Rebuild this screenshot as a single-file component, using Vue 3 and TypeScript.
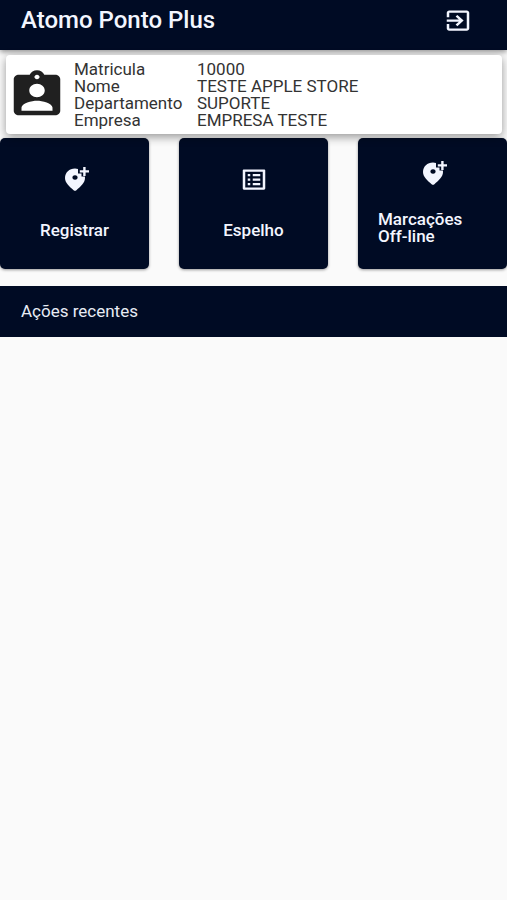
<script setup lang="ts">
interface Field {
  label: string
  value: string
}

interface Action {
  label: string
  icon: 'pin' | 'list'
}

const fields: Field[] = [
  { label: 'Matricula', value: '10000' },
  { label: 'Nome', value: 'TESTE APPLE STORE' },
  { label: 'Departamento', value: 'SUPORTE' },
  { label: 'Empresa', value: 'EMPRESA TESTE' },
]

const actions: Action[] = [
  { label: 'Registrar', icon: 'pin' },
  { label: 'Espelho', icon: 'list' },
  { label: 'Marcações Off-line', icon: 'pin' },
]
</script>

<template>
  <div class="page">
    <header class="app-bar">
      <h1 class="title">Atomo Ponto Plus</h1>
      <button class="exit" type="button" aria-label="Sair">
        <svg class="icon" viewBox="0 0 24 24" preserveAspectRatio="none" aria-hidden="true">
          <path d="M10.09 15.59L11.5 17l5-5-5-5-1.41 1.41L12.67 11H3v2h9.67l-2.58 2.59zM19 3H5c-1.11 0-2 .9-2 2v4h2V5h14v14H5v-4H3v4c0 1.1.89 2 2 2h14c1.1 0 2-.9 2-2V5c0-1.1-.9-2-2-2z" />
        </svg>
      </button>
    </header>

    <main>
      <section class="profile">
        <svg class="badge" viewBox="0 0 24 24" preserveAspectRatio="none" aria-hidden="true">
          <path d="M19 3h-4.18C14.4 1.84 13.3 1 12 1c-1.3 0-2.4.84-2.82 2H5c-1.1 0-2 .9-2 2v14c0 1.1.9 2 2 2h14c1.1 0 2-.9 2-2V5c0-1.1-.9-2-2-2zm-7 0c.55 0 1 .45 1 1s-.45 1-1 1-1-.45-1-1 .45-1 1-1zm0 4c1.66 0 3 1.34 3 3s-1.34 3-3 3-3-1.34-3-3 1.34-3 3-3zm6 12H4v0h2v-1.4c0-2 4-3.1 6-3.1s6 1.1 6 3.1V19z" />
        </svg>
        <dl class="fields">
          <template v-for="field in fields" :key="field.label">
            <dt>{{ field.label }}</dt>
            <dd>{{ field.value }}</dd>
          </template>
        </dl>
      </section>

      <nav class="actions">
        <button v-for="action in actions" :key="action.label" class="action" type="button">
          <svg v-if="action.icon === 'pin'" class="icon" viewBox="-1 0 30 27" aria-hidden="true">
            <path fill-rule="evenodd" d="M14 2.600C8.300 2.600 4 6.600 4 12c0 5 4.500 8.600 8.600 12.200q1.400 1.200 2.800 0C19.500 20.600 24 17 24 12q0-.8-.1-1.500H20.500V7.500h-3.500V2.900Q15.500 2.600 14 2.600zM14 9.200a2.600 2.300 0 1 0 .01 0z" />
            <path d="M22.200 1h2.400v3.300H28v2.300h-3.400V10h-2.400V6.600h-3.400V4.300h3.400z" />
          </svg>
          <svg v-else class="icon" viewBox="0 0 24 24" preserveAspectRatio="none" aria-hidden="true">
            <path d="M19 5v14H5V5h14m1.100-2H3.900c-.5 0-.9.4-.9.9v16.200c0 .4.4.9.9.9h16.200c.4 0 .9-.5.9-.9V3.900c0-.5-.5-.9-.9-.9zM11 7h6v2h-6V7zm0 4h6v2h-6v-2zm0 4h6v2h-6v-2zM7 7h2v2H7V7zm0 4h2v2H7v-2zm0 4h2v2H7v-2z" />
          </svg>
          <span class="label">{{ action.label }}</span>
        </button>
      </nav>

      <h2 class="recent">Ações recentes</h2>
    </main>
  </div>
</template>

<style>
body {
  background: #fafafa;
}
</style>

<style scoped>
.page {
  font-family: Roboto, "Liberation Sans", sans-serif;
  font-size: 17px;
  line-height: 17px;
  color: #333;
}

.app-bar {
  display: flex;
  align-items: center;
  justify-content: space-between;
  height: 50px;
  box-sizing: border-box;
  padding: 0 34px 10px 21px;
  background: #000b24;
  color: #f3f6ff;
  box-shadow: 0 2px 5px rgba(0, 0, 0, 0.4);
}

.title {
  margin: 0;
  font-size: 24px;
  line-height: 28px;
  font-weight: 500;
}

.exit {
  display: flex;
  padding: 0;
  border: 0;
  background: none;
  color: inherit;
}

.icon {
  display: block;
  width: 30px;
  height: 27px;
  fill: currentColor;
}

.profile {
  position: relative;
  display: flex;
  align-items: center;
  height: 79px;
  box-sizing: border-box;
  margin: 5px 5px 4px 6px;
  border-radius: 4px;
  background: #fff;
  box-shadow: 0 3px 10px rgba(0, 0, 0, 0.4);
}

.badge {
  flex: none;
  width: 62px;
  height: 54px;
  fill: #202020;
}

.fields {
  display: grid;
  grid-template-columns: 109px auto;
  column-gap: 14px;
  margin: 0 0 0 6px;
}

.fields dt,
.fields dd {
  margin: 0;
}

.actions {
  display: grid;
  grid-template-columns: repeat(3, minmax(0, 1fr));
  column-gap: 30px;
}

.action {
  display: flex;
  flex-direction: column;
  align-items: center;
  justify-content: center;
  gap: 29px;
  height: 131px;
  padding: 0 20px 2px;
  border: 0;
  border-radius: 5px;
  background: #000b24;
  color: #f3f6ff;
  font: 500 17px/17px Roboto, "Liberation Sans", sans-serif;
  text-align: left;
  box-shadow: 0 1px 3px rgba(0, 0, 0, 0.4);
}

.action:last-child {
  gap: 24px;
}

.recent {
  margin: 17px 0 0;
  padding: 17px 21px;
  background: #000b24;
  color: #e8ecf4;
  font-size: 17px;
  line-height: 17px;
  font-weight: 400;
}
</style>
